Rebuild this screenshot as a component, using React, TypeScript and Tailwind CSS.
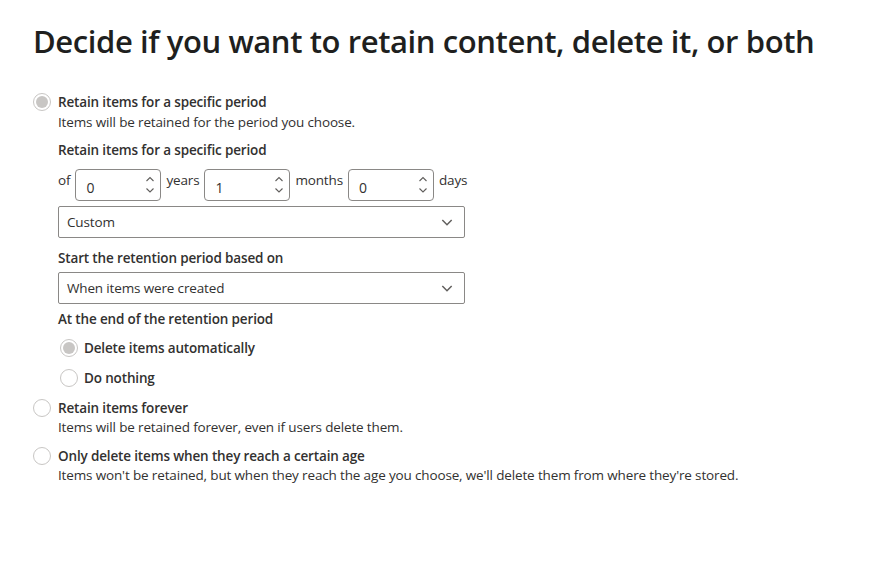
import { useState } from 'react';

const font = { fontFamily: '"Open Sans", "Noto Sans", sans-serif' };

const Chevron = ({ up = false, className = '' }: { up?: boolean; className?: string }) => (
  <svg viewBox="0 0 12 12" className={className} fill="none" stroke="currentColor" strokeWidth="1.1">
    {up ? <path d="M2.5 8 L6 4.5 L9.5 8" /> : <path d="M2.5 4.5 L6 8 L9.5 4.5" />}
  </svg>
);

const Radio = ({ checked, onClick }: { checked: boolean; onClick: () => void }) => (
  <button
    onClick={onClick}
    className="w-[18px] h-[18px] rounded-full border border-[#c8c6c4] flex items-center justify-center shrink-0 bg-white"
  >
    {checked && <span className="w-[12px] h-[12px] rounded-full bg-[#c8c6c4]" />}
  </button>
);

const SpinInput = ({ value }: { value: string }) => (
  <div className="w-[86px] h-[32px] border border-[#8a8886] rounded-[4px] flex items-center pl-[10px] pr-[4px]">
    <span className="flex-1 pt-[5px] text-[14px] text-[#323130]">{value}</span>
    <div className="flex flex-col text-[#605e5c] -mt-[1px]">
      <Chevron up className="w-[12px] h-[12px]" />
      <Chevron className="w-[12px] h-[12px] -mt-[1px]" />
    </div>
  </div>
);

const Dropdown = ({ value }: { value: string }) => (
  <div className="w-[407px] h-[32px] border border-[#8a8886] rounded-[2px] flex items-center pl-[8px] pr-[9px]">
    <span className="flex-1 text-[#323130]">{value}</span>
    <Chevron className="w-[16px] h-[16px] text-[#605e5c]" />
  </div>
);

export default function App() {
  const [main, setMain] = useState('period');
  const [end, setEnd] = useState('delete');

  return (
    <div className="w-[896px] h-[563px] bg-white text-[#323130] pl-[33px] pt-[21px]" style={font}>
      <h1 className="text-[31px] leading-[40px] font-semibold text-[#201f1e] tracking-[-0.4px]">
        Decide if you want to retain content, delete it, or both
      </h1>

      <div className="mt-[31px] flex flex-col text-[13.5px] leading-[20px] tracking-[-0.15px]">
        <div className="flex gap-[7px]">
          <div className="pt-[1px]">
            <Radio checked={main === 'period'} onClick={() => setMain('period')} />
          </div>
          <div className="flex flex-col">
            <span className="font-semibold">Retain items for a specific period</span>
            <span>Items will be retained for the period you choose.</span>

            <span className="font-semibold mt-[8px]">Retain items for a specific period</span>
            <div className="flex items-start mt-[9px] gap-[5px]">
              <span className="pt-[1px]">of</span>
              <SpinInput value="0" />
              <span className="pt-[1px]">years</span>
              <SpinInput value="1" />
              <span className="pt-[1px]">months</span>
              <SpinInput value="0" />
              <span className="pt-[1px]">days</span>
            </div>
            <div className="mt-[5px]">
              <Dropdown value="Custom" />
            </div>

            <span className="font-semibold mt-[10px]">Start the retention period based on</span>
            <div className="mt-[4px]">
              <Dropdown value="When items were created" />
            </div>

            <span className="font-semibold mt-[5px]">At the end of the retention period</span>
            <div className="flex flex-col gap-[10px] mt-[9px] pl-[2px]">
              <label className="flex items-center gap-[6px]">
                <Radio checked={end === 'delete'} onClick={() => setEnd('delete')} />
                <span className="font-semibold">Delete items automatically</span>
              </label>
              <label className="flex items-center gap-[6px]">
                <Radio checked={end === 'nothing'} onClick={() => setEnd('nothing')} />
                <span className="font-semibold">Do nothing</span>
              </label>
            </div>
          </div>
        </div>

        <div className="flex gap-[7px] mt-[10px]">
          <div className="pt-[1px]">
            <Radio checked={main === 'forever'} onClick={() => setMain('forever')} />
          </div>
          <div className="flex flex-col">
            <span className="font-semibold">Retain items forever</span>
            <span className="-mt-[1px]">Items will be retained forever, even if users delete them.</span>
          </div>
        </div>

        <div className="flex gap-[7px] mt-[9px]">
          <div className="pt-[1px]">
            <Radio checked={main === 'age'} onClick={() => setMain('age')} />
          </div>
          <div className="flex flex-col">
            <span className="font-semibold">Only delete items when they reach a certain age</span>
            <span className="-mt-[1px]">
              Items won't be retained, but when they reach the age you choose, we'll delete them from where they're stored.
            </span>
          </div>
        </div>
      </div>
    </div>
  );
}
